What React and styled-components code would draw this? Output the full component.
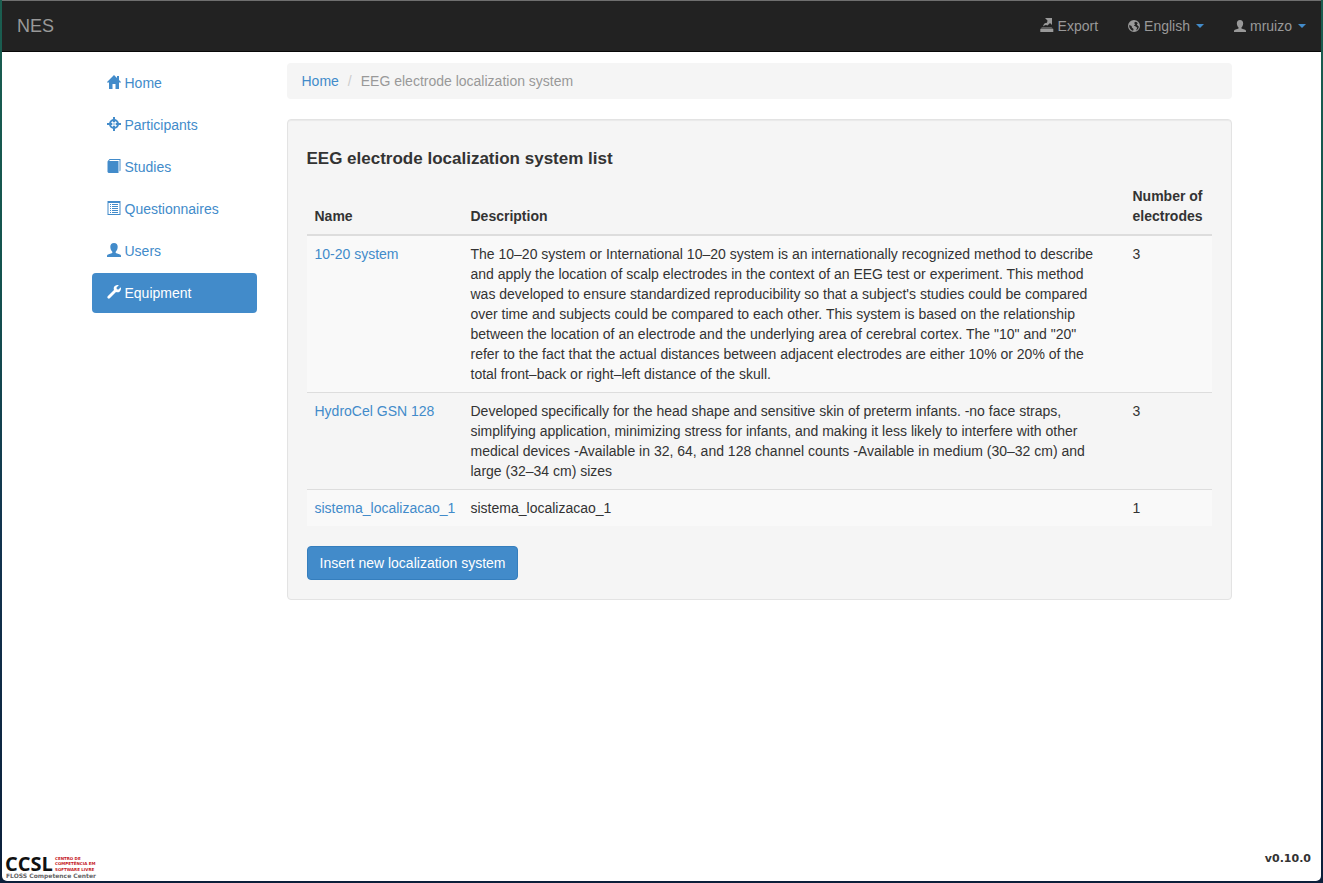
import React from 'react';
import styled, { createGlobalStyle } from 'styled-components';

const GlobalStyle = createGlobalStyle`
  * { box-sizing: border-box; }
  body {
    margin: 0;
    font-family: "Helvetica Neue", Helvetica, "Liberation Sans", Arial, sans-serif;
    font-size: 14px;
    line-height: 20px;
    color: #333;
  }
  a { color: #428bca; text-decoration: none; }
  a:hover { text-decoration: underline; }
`;

const Desktop = styled.div`
  min-height: 100vh;
  display: flex;
  padding: 0 2px 2px;
  background: linear-gradient(#1b5e50 0, #14544f 30%, #12344f 60%, #0b1f3a 100%);
`;

const Page = styled.div`
  flex: 1;
  min-width: 0;
  display: flex;
  flex-direction: column;
  overflow: hidden;
  background: #fff;
  border-top: 1px solid #6f6f6f;
  border-radius: 0 0 5px 5px;
`;

const Navbar = styled.header`
  display: flex;
  justify-content: space-between;
  align-items: center;
  height: 51px;
  background: #222;
  border-bottom: 1px solid #080808;
`;

const Brand = styled.a`
  padding: 15px;
  font-size: 18px;
  && { color: #999; }
`;

const NavActions = styled.nav`
  display: flex;
`;

const navItem = `
  display: flex;
  align-items: center;
  gap: 4px;
  padding: 15px;
  border: 0;
  background: none;
  font: inherit;
  cursor: pointer;
`;

const NavLink = styled.a`
  ${navItem}
  && { color: #999; }
`;

const NavMenuButton = styled.button`
  ${navItem}
  color: #999;
`;

const Caret = styled.span`
  margin-left: 2px;
  border-top: 4px solid #428bca;
  border-left: 4px solid transparent;
  border-right: 4px solid transparent;
`;

const Glyph = styled.svg`
  width: ${(p) => (p.$small ? 12 : 14)}px;
  height: ${(p) => (p.$small ? 12 : 14)}px;
  margin-bottom: ${(p) => (p.$small ? 0 : 2)}px;
  flex: none;
  fill: currentColor;
`;

const Container = styled.div`
  flex: 1;
  display: flex;
  align-items: flex-start;
  gap: 30px;
  width: 100%;
  max-width: 1170px;
  margin: 0 auto;
  padding: 11px 15px 20px;
`;

const Sidebar = styled.nav`
  flex: 0 0 165px;
  display: flex;
  flex-direction: column;
  gap: 2px;
`;

const SideLink = styled.a`
  display: flex;
  align-items: center;
  gap: 4px;
  padding: 10px 15px;
  border-radius: 4px;
  background: ${(p) => (p.$active ? '#428bca' : 'transparent')};
  && { color: ${(p) => (p.$active ? '#fff' : '#428bca')}; }
`;

const Content = styled.main`
  flex: 1;
  min-width: 0;
`;

const Breadcrumb = styled.ol`
  display: flex;
  margin: 0 0 20px;
  padding: 8px 15px;
  list-style: none;
  background: #f5f5f5;
  border-radius: 4px;
`;

const Crumb = styled.li`
  color: #999;
  & + &::before {
    content: "/";
    padding: 0 9px;
    color: #ccc;
  }
`;

const Well = styled.section`
  padding: 19px;
  background: #f5f5f5;
  border: 1px solid #e3e3e3;
  border-radius: 4px;
  box-shadow: inset 0 1px 1px rgba(0, 0, 0, 0.05);
`;

const Title = styled.h4`
  margin: 10px 0;
  font-size: 17px;
  line-height: 19px;
  font-weight: 600;
`;

const Table = styled.table`
  width: 100%;
  margin-bottom: 20px;
  border-collapse: collapse;
  table-layout: fixed;
`;

const HeadCell = styled.th`
  width: ${(p) => p.$width || 'auto'};
  padding: 8px;
  text-align: left;
  vertical-align: bottom;
  border-bottom: 2px solid #ddd;
`;

const Row = styled.tr`
  &:nth-child(odd) { background: #f9f9f9; }
`;

const Cell = styled.td`
  padding: 8px ${(p) => (p.$wide ? '20px' : '8px')} 8px 8px;
  vertical-align: top;
  border-top: 1px solid #ddd;
`;

const PrimaryButton = styled.button`
  display: block;
  padding: 6px 12px;
  font: inherit;
  color: #fff;
  background: #428bca;
  border: 1px solid #357ebd;
  border-radius: 4px;
  cursor: pointer;
`;

const Footer = styled.footer`
  display: flex;
  justify-content: space-between;
  align-items: flex-end;
  padding: 0 10px 0 3px;
`;

const Logo = styled.svg`
  width: 94px;
  height: 34px;
`;

const Version = styled.strong`
  padding-bottom: 12px;
  font: bold 11px/20px "DejaVu Sans", Verdana, sans-serif;
`;

const glyphs = {
  home: <path d="M7 0 10 3V1h2v4l2.300 2.400H12V14H8.500V9h-3v5H2V7.400H-.3z" />,
  participants: (
    <>
      <circle cx="7" cy="7" r="4" fill="none" stroke="currentColor" strokeWidth="2" />
      <path d="M6 0h2v5.300H6zM6 8.700h2V14H6zM0 6h5.300v2H0zM8.700 6H14v2H8.700z" />
      <circle cx="7" cy="7" r=".7" />
    </>
  ),
  book: <path d="M.5 2.500 2.500 0H13.500V11.500L12.500 12.500V1H3L2 2H11.500V14H1.500L.5 13z" />,
  list: (
    <path
      fillRule="evenodd"
      d="M.5 0h13v14H.5zM1.500 2v11h11V2zM3 3h1v1H3zM5 3h6v1H5zM3 5h1v1H3zM5 5h6v1H5zM3 7h1v1H3zM5 7h6v1H5zM3 9h1v1H3zM5 9h6v1H5zM3 11h1v1H3zM5 11h6v1H5z"
    />
  ),
  user: (
    <path d="M7 0c2.400 0 3.700 1.500 3.700 3.800 0 2.200-.9 4-2 5v1.200l4.300 1.500c.7.300 1 .8 1 1.500v1H0v-1c0-.7.3-1.200 1-1.500L5.300 10V8.800c-1.100-1-2-2.800-2-5C3.300 1.500 4.600 0 7 0z" />
  ),
  wrench: (
    <path d="M13.800 2.200 11.500 4.500 9.800 4.200 9.500 2.500 11.800.2C10.200-.3 8.500.1 7.500 1.300 6.600 2.400 6.500 3.800 7 5L.7 11.200a1.500 1.500 0 0 0 2.100 2.100L9 7c1.300.5 2.700.4 3.800-.6 1.100-1.100 1.500-2.700 1-4.200z" />
  ),
  export: (
    <>
      <path d="M5 0H12V7L10 5 7.500 7.500C6 6.500 4.500 7 3 8.500L3.500 7C4 5.500 5.500 4.800 7 4.700L7.500 2.500zM.3 11h13v3H.3z" />
      <path d="M2 9H11.500L13.300 11H.3z" opacity=".5" />
    </>
  ),
  globe: (
    <path
      fillRule="evenodd"
      d="M7 0a7 7 0 1 1 0 14A7 7 0 0 1 7 0zM8.800 2 7 3.500 8.500 5 6.800 6.500 9 7.500 10.800 9 9.300 12.200C11.500 11.300 12.600 9.500 12.600 7.500L11.200 6.500 10.300 5 11.500 3.700C10.800 2.900 9.800 2.300 8.800 2zM1.500 5.800C1 8.800 3 11.800 6 12.500L6.500 10.500 4.500 8.800 4.200 7z"
    />
  ),
};

const Icon = ({ name, small }) => (
  <Glyph viewBox="0 0 14 14" $small={small} aria-hidden="true">
    {glyphs[name]}
  </Glyph>
);

const menu = [
  ['Home', 'home'],
  ['Participants', 'participants'],
  ['Studies', 'book'],
  ['Questionnaires', 'list'],
  ['Users', 'user'],
  ['Equipment', 'wrench'],
];

const systems = [
  {
    name: '10-20 system',
    description:
      'The 10–20 system or International 10–20 system is an internationally recognized method to describe and apply the location of scalp electrodes in the context of an EEG test or experiment. This method was developed to ensure standardized reproducibility so that a subject\'s studies could be compared over time and subjects could be compared to each other. This system is based on the relationship between the location of an electrode and the underlying area of cerebral cortex. The "10" and "20" refer to the fact that the actual distances between adjacent electrodes are either 10% or 20% of the total front–back or right–left distance of the skull.',
    electrodes: 3,
  },
  {
    name: 'HydroCel GSN 128',
    description:
      'Developed specifically for the head shape and sensitive skin of preterm infants. -no face straps, simplifying application, minimizing stress for infants, and making it less likely to interfere with other medical devices -Available in 32, 64, and 128 channel counts -Available in medium (30–32 cm) and large (32–34 cm) sizes',
    electrodes: 3,
  },
  { name: 'sistema_localizacao_1', description: 'sistema_localizacao_1', electrodes: 1 },
];

export default function App() {
  return (
    <>
      <GlobalStyle />
      <Desktop>
        <Page>
          <Navbar>
            <Brand href="#">NES</Brand>
            <NavActions>
              <NavLink href="#export"><Icon name="export" />Export</NavLink>
              <NavMenuButton type="button"><Icon name="globe" small />English<Caret /></NavMenuButton>
              <NavMenuButton type="button"><Icon name="user" small />mruizo<Caret /></NavMenuButton>
            </NavActions>
          </Navbar>
          <Container>
            <Sidebar>
              {menu.map(([label, icon]) => (
                <SideLink key={label} href={`#${icon}`} $active={label === 'Equipment'}>
                  <Icon name={icon} />
                  {label}
                </SideLink>
              ))}
            </Sidebar>
            <Content>
              <Breadcrumb>
                <Crumb><a href="#home">Home</a></Crumb>
                <Crumb>EEG electrode localization system</Crumb>
              </Breadcrumb>
              <Well>
                <Title>EEG electrode localization system list</Title>
                <Table>
                  <thead>
                    <tr>
                      <HeadCell $width="156px">Name</HeadCell>
                      <HeadCell>Description</HeadCell>
                      <HeadCell $width="87px">Number of electrodes</HeadCell>
                    </tr>
                  </thead>
                  <tbody>
                    {systems.map((s) => (
                      <Row key={s.name}>
                        <Cell><a href="#system">{s.name}</a></Cell>
                        <Cell $wide>{s.description}</Cell>
                        <Cell>{s.electrodes}</Cell>
                      </Row>
                    ))}
                  </tbody>
                </Table>
                <PrimaryButton type="button">Insert new localization system</PrimaryButton>
              </Well>
            </Content>
          </Container>
          <Footer>
            <Logo viewBox="0 0 94 34" role="img" aria-label="CCSL">
              <text x="0" y="24" fontFamily="Open Sans, sans-serif" fontWeight="700" fontSize="20" fill="#111">CCSL</text>
              <g fontFamily="DejaVu Sans, sans-serif" fontWeight="700" fontSize="4" fill="#c4161c">
                <text x="50" y="13">CENTRO DE</text>
                <text x="50" y="18">COMPETÊNCIA EM</text>
                <text x="50" y="24">SOFTWARE LIVRE</text>
              </g>
              <text x="1" y="31" fontFamily="DejaVu Sans, sans-serif" fontWeight="700" fontSize="6" fill="#666">FLOSS Competence Center</text>
            </Logo>
            <Version>v0.10.0</Version>
          </Footer>
        </Page>
      </Desktop>
    </>
  );
}
